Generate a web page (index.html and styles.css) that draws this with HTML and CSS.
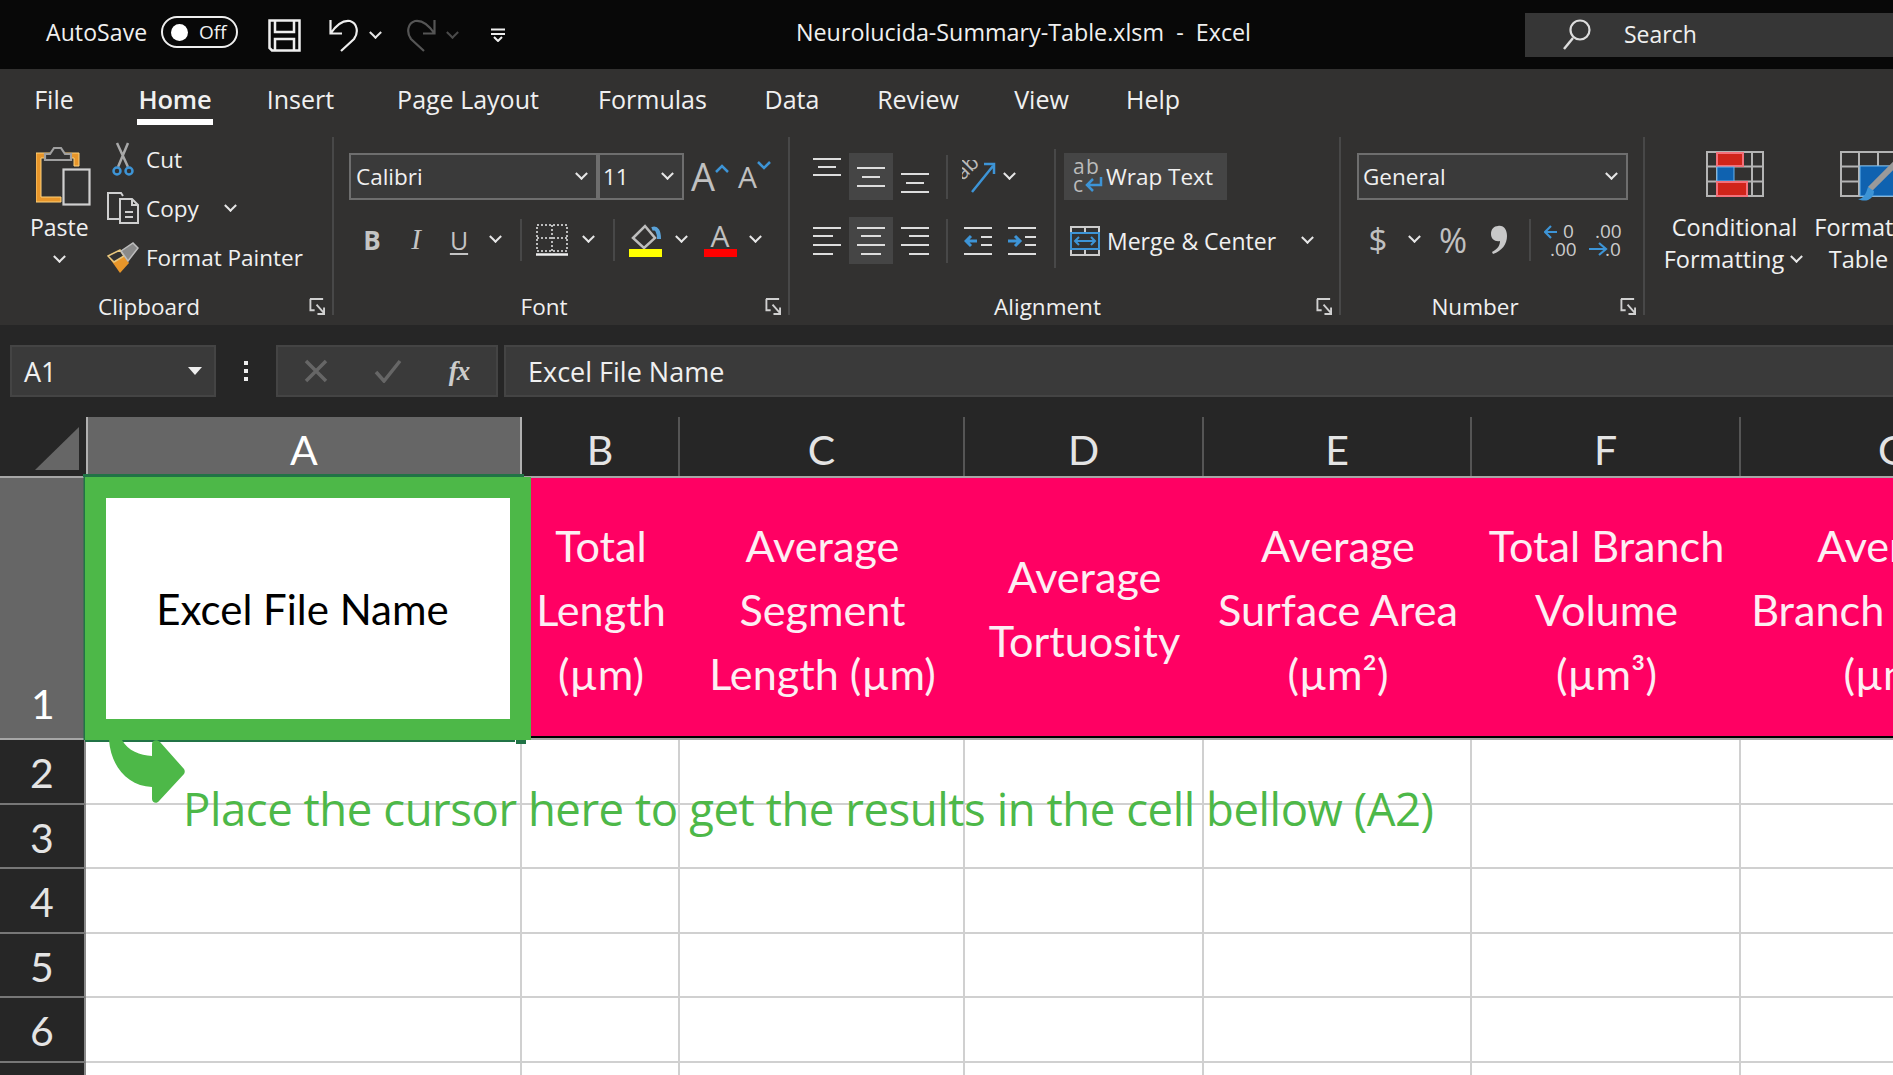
FILE: index.html
```html
<!DOCTYPE html>
<html lang="en">
<head>
<meta charset="utf-8">
<title>Neurolucida-Summary-Table.xlsm - Excel</title>
<link rel="stylesheet" href="styles.css">
</head>
<body>
<svg class="sprite" width="0" height="0">
  <symbol id="launch" viewBox="0 0 17 18"><path d="M1 1H15M1.500 1V13H6M8 7L16 16M16 10V17H9" fill="none" stroke="#d0d0d0" stroke-width="2"/></symbol>
</svg>
<header class="titlebar">
  <span class="autosave">AutoSave</span>
  <span class="toggle"><i class="knob"></i><span class="off">Off</span></span>
  <svg class="q-save" width="33" height="33" viewBox="0 0 33 33"><path d="M1.500 1.500H31.500V31.500H4L1.500 29ZM7 1.500V13H26V1.500M7 31.500V20H26V31.500" fill="none" stroke="#eee" stroke-width="2.500"/></svg>
  <svg class="q-undo" width="30" height="33" viewBox="0 0 30 33"><path d="M1.500 1V14.500H13M1.500 14.500C8 5 15 1 21 2C28 4 30 13 25 20L12 32" fill="none" stroke="#eee" stroke-width="2.200"/></svg>
  <i class="chev q-chev"></i>
  <svg class="q-redo" width="30" height="33" viewBox="0 0 30 33"><path d="M28.500 1V14.500H17M28.500 14.500C22 5 15 1 9 2C2 4 0 13 5 20L18 32" fill="none" stroke="#555" stroke-width="2.200"/></svg>
  <i class="chev q-chev dim"></i>
  <svg class="q-more" width="14" height="14" viewBox="0 0 14 14"><path d="M0 1.500H14M0 6H14M3 9L7 13L11 9" fill="none" stroke="#eee" stroke-width="2"/></svg>
  <span class="doc-title">Neurolucida-Summary-Table.xlsm&nbsp; -&nbsp; Excel</span>
  <div class="search">
    <svg width="28" height="31" viewBox="0 0 28 31"><circle cx="17" cy="11" r="9.500" fill="none" stroke="#ddd" stroke-width="2.200"/><path d="M10 19L1 30" stroke="#ddd" stroke-width="2.500"/></svg>
    <span>Search</span>
  </div>
</header>

<section class="ribbon-wrap">
  <nav class="tabs">
    <span>File</span><span class="active">Home</span><span>Insert</span><span>Page Layout</span><span>Formulas</span><span>Data</span><span>Review</span><span>View</span><span>Help</span>
  </nav>
  <div class="ribbon">
    <div class="group g-clip">
      <div class="g-body clip-body">
        <div class="paste">
          <svg class="paste-ico" width="56" height="62" viewBox="0 0 56 62">
            <path d="M0 8H43V21H38V13H5V52H25V57H0Z" fill="#e8962a" stroke="#ffd27a" stroke-width="1"/>
            <path d="M9 15V9H14L18 3H25L29 9H35V15Z" fill="#323232" stroke="#a0a0a0" stroke-width="2.200"/>
            <rect x="27.500" y="24.500" width="26" height="35" fill="#323232" stroke="#cfcfcf" stroke-width="2.200"/>
          </svg>
          <span class="paste-label">Paste</span>
          <i class="chev"></i>
        </div>
        <div class="clip-rows">
          <div class="clip-row">
            <svg width="32" height="34" viewBox="0 0 32 34"><path d="M10 1L21 25M21 1L11 25" stroke="#a8a8a8" stroke-width="2.500" fill="none"/><circle cx="10" cy="29" r="3.500" fill="none" stroke="#3d94d6" stroke-width="2.500"/><circle cx="22" cy="29" r="3.500" fill="none" stroke="#3d94d6" stroke-width="2.500"/></svg>
            <span>Cut</span>
          </div>
          <div class="clip-row">
            <svg width="32" height="32" viewBox="0 0 32 32"><path d="M12 27H1V1H14L16 4" fill="none" stroke="#cfcfcf" stroke-width="2"/><path d="M13 7H25L31 13V31H13ZM25 7V13H31" fill="#323232" stroke="#cfcfcf" stroke-width="2"/><path d="M18 20H26M18 25H26" stroke="#cfcfcf" stroke-width="2"/></svg>
            <span>Copy</span><i class="chev copy-chev"></i>
          </div>
          <div class="clip-row">
            <svg width="32" height="32" viewBox="0 0 32 32"><path d="M1 14L13 8L22 21L13 31Z" fill="#e8962a"/><path d="M1 14L13 8L17 14L7 20Z" fill="#323232" stroke="#e9c77d" stroke-width="1.500"/><path d="M14 9L26 1L31 6L21 19Z" fill="#8a8a8a" stroke="#bdbdbd" stroke-width="1.500"/></svg>
            <span>Format Painter</span>
          </div>
        </div>
      </div>
      <footer class="g-foot"><span>Clipboard</span><svg class="launch"><use href="#launch"/></svg></footer>
    </div>
    <i class="vsep"></i>

    <div class="group g-font">
      <div class="g-body">
        <div class="font-top">
          <div class="combo font-name"><span>Calibri</span><i class="chev"></i></div>
          <div class="combo font-size"><span>11</span><i class="chev"></i></div>
          <span class="grow-a">A<svg width="14" height="9" viewBox="0 0 14 9"><path d="M1 8L7 2L13 8" fill="none" stroke="#3d94d6" stroke-width="2.500"/></svg></span>
          <span class="shrink-a">A<svg width="14" height="9" viewBox="0 0 14 9"><path d="M1 1L7 7L13 1" fill="none" stroke="#3d94d6" stroke-width="2.500"/></svg></span>
        </div>
        <div class="font-bottom">
          <b class="fmt">B</b><em class="fmt italic">I</em><span class="fmt under">U</span><i class="chev"></i>
          <i class="minisep"></i>
          <svg width="32" height="32" viewBox="0 0 32 32"><path d="M1 1H31V27H1ZM16 1V27M1 14H31" fill="none" stroke="#bbb" stroke-width="2" stroke-dasharray="2 2"/><path d="M0 30.500H32" stroke="#eee" stroke-width="2.500"/></svg>
          <i class="chev"></i>
          <i class="minisep"></i>
          <div class="color-ico">
            <svg width="34" height="25" viewBox="0 0 34 25"><path d="M5 14L17 2L27 14L16 24Z" fill="none" stroke="#bdbdbd" stroke-width="2.500"/><path d="M24 5C29 3 31 8 31 15" fill="none" stroke="#5aa2d8" stroke-width="4"/></svg>
            <i class="bar yellow"></i>
          </div>
          <i class="chev"></i>
          <div class="color-ico">
            <span class="color-a">A</span>
            <i class="bar red"></i>
          </div>
          <i class="chev"></i>
        </div>
      </div>
      <footer class="g-foot"><span>Font</span><svg class="launch"><use href="#launch"/></svg></footer>
    </div>
    <i class="vsep"></i>

    <div class="group g-align">
      <div class="g-body align-body">
        <div class="align-left">
          <div class="align-row top-row">
            <div class="al v-top"><svg width="28" height="20" viewBox="0 0 28 20"><path d="M0 1H28M5 9H23M0 17H28" stroke="#ddd" stroke-width="2"/></svg></div>
            <div class="al on"><svg width="28" height="20" viewBox="0 0 28 20"><path d="M0 1H28M5 10H23M0 19H28" stroke="#ddd" stroke-width="2"/></svg></div>
            <div class="al v-bot"><svg width="28" height="20" viewBox="0 0 28 20"><path d="M0 1H28M5 10H23M0 19H28" stroke="#ddd" stroke-width="2"/></svg></div>
            <i class="minisep sep-a"></i>
            <div class="orient">
              <svg width="34" height="34" viewBox="0 0 34 34"><text x="0" y="0" class="ico-txt lg" transform="translate(1 21) rotate(-45)">ab</text><path d="M10 32L31 6M22 4H32V14" fill="none" stroke="#3d94d6" stroke-width="2.500"/></svg>
            </div>
            <i class="chev"></i>
          </div>
          <div class="align-row">
            <div class="al"><svg width="28" height="28" viewBox="0 0 28 28"><path d="M0 1H28M0 9H20M0 18H28M0 27H20" stroke="#ddd" stroke-width="2"/></svg></div>
            <div class="al on"><svg width="28" height="28" viewBox="0 0 28 28"><path d="M0 1H28M4 9H24M0 18H28M4 27H24" stroke="#ddd" stroke-width="2"/></svg></div>
            <div class="al"><svg width="28" height="28" viewBox="0 0 28 28"><path d="M0 1H28M8 9H28M0 18H28M8 27H28" stroke="#ddd" stroke-width="2"/></svg></div>
            <i class="minisep sep-a"></i>
            <div class="indent"><svg width="30" height="28" viewBox="0 0 30 28"><path d="M0 1H28M17 10H28M17 18H28M0 27H28" stroke="#ddd" stroke-width="2"/><path d="M13 14H2M7 9L2 14L7 19" fill="none" stroke="#3d94d6" stroke-width="3"/></svg></div>
            <div class="indent"><svg width="30" height="28" viewBox="0 0 30 28"><path d="M1 1H29M18 10H29M18 18H29M1 27H29" stroke="#ddd" stroke-width="2"/><path d="M1 14H13M8 9L13 14L8 19" fill="none" stroke="#3d94d6" stroke-width="3"/></svg></div>
          </div>
        </div>
        <i class="vsep-tall"></i>
        <div class="align-right">
          <div class="wrap-btn">
            <svg width="30" height="36" viewBox="0 0 30 36"><text x="0" y="15" class="ico-txt lg">a</text><text x="13" y="15" class="ico-txt lg">b</text><text x="0" y="33" class="ico-txt lg">c</text><path d="M28 18V26H15M20 20L14 26L20 32" fill="none" stroke="#3d94d6" stroke-width="2.500"/></svg>
            <span>Wrap Text</span>
          </div>
          <div class="merge-btn">
            <svg width="30" height="30" viewBox="0 0 30 30"><path d="M1 1H29V29H1ZM15 1V7M15 23V29" fill="none" stroke="#ccc" stroke-width="2"/><rect x="1" y="7" width="28" height="16" fill="#323232" stroke="#3d94d6" stroke-width="2"/><path d="M5 15H25M9 11L5 15L9 19M21 11L25 15L21 19" fill="none" stroke="#3d94d6" stroke-width="2"/></svg>
            <span>Merge &amp; Center</span><i class="chev merge-chev"></i>
          </div>
        </div>
      </div>
      <footer class="g-foot"><span>Alignment</span><svg class="launch"><use href="#launch"/></svg></footer>
    </div>
    <i class="vsep"></i>

    <div class="group g-num">
      <div class="g-body">
        <div class="combo num-combo"><span>General</span><i class="chev"></i></div>
        <div class="num-bottom">
          <span class="dollar">$</span><i class="chev"></i><span class="pct">%</span>
          <svg width="18" height="32" viewBox="0 0 18 32"><path d="M8 2C14 1 17 6 17 12C17 20 12 27 3 30L2 28C8 25 10 21 10 17C5 18 1 15 1 10C1 5 4 2 8 2Z" fill="#c8c8c8"/></svg>
          <i class="minisep"></i>
          <svg width="32" height="34" viewBox="0 0 32 34"><path d="M13 9H2M7 3L1 9L7 15" fill="none" stroke="#3d94d6" stroke-width="2.200"/><text x="19" y="15" class="ico-txt num">0</text><text x="6" y="33" class="ico-txt num">.00</text></svg>
          <svg width="34" height="34" viewBox="0 0 34 34"><text x="7" y="15" class="ico-txt num">.00</text><path d="M1 26H17M11 20L18 26L11 32" fill="none" stroke="#3d94d6" stroke-width="2.200"/><text x="17" y="33" class="ico-txt num">.0</text></svg>
        </div>
      </div>
      <footer class="g-foot"><span>Number</span><svg class="launch"><use href="#launch"/></svg></footer>
    </div>
    <i class="vsep"></i>

    <div class="group g-styles">
      <div class="big-btn cf">
        <svg width="58" height="46" viewBox="0 0 58 46"><path d="M1 1H57V45H1ZM1 15.500H57M1 30.500H57M11 1V45M46 1V45" fill="none" stroke="#b4b4b4" stroke-width="2"/><rect x="11" y="2" width="26" height="13" fill="#d0241a" stroke="#f4707a" stroke-width="2"/><rect x="11" y="16" width="17" height="14" fill="#0f62b0" stroke="#68b4ee" stroke-width="1"/><rect x="11" y="31" width="30" height="14" fill="#d0241a" stroke="#f4707a" stroke-width="2"/></svg>
        <span class="big-label">Conditional</span>
        <span class="big-label with-chev">Formatting <i class="chev"></i></span>
      </div>
      <div class="big-btn ft">
        <svg width="58" height="52" viewBox="0 0 58 52"><path d="M1 1H57V45H1ZM1 15.500H57M1 30.500H57M19 1V45M38 1V45" fill="none" stroke="#b4b4b4" stroke-width="2"/><rect x="20" y="15" width="36" height="30" fill="#0f62b0" stroke="#68b4ee" stroke-width="1"/><path d="M30 38L56 12" stroke="#9a9a9a" stroke-width="6"/><path d="M18 48C24 48 26 42 28 36L34 40C34 48 26 52 18 48Z" fill="#3d94d6"/></svg>
        <span class="big-label">Format as</span>
        <span class="big-label with-chev">Table <i class="chev"></i></span>
      </div>
    </div>
  </div>
</section>

<section class="formula-bar">
  <div class="namebox"><span>A1</span><i class="tri"></i></div>
  <div class="dots"><i></i><i></i><i></i></div>
  <div class="fx-btns">
    <svg class="fb1" width="24" height="24" viewBox="0 0 24 24"><path d="M2 2L22 22M22 2L2 22" stroke="#666" stroke-width="3.500"/></svg>
    <svg class="fb2" width="28" height="24" viewBox="0 0 28 24"><path d="M2 13L10 22L26 2" fill="none" stroke="#666" stroke-width="3.500"/></svg>
    <span class="fb3">fx</span>
  </div>
  <div class="formula-input">Excel File Name</div>
</section>

<main class="sheet">
  <div class="col-head">
    <div class="corner"><svg width="44" height="43" viewBox="0 0 44 43"><path d="M44 0V43H0Z" fill="#666"/></svg></div>
    <div class="ch sel">A</div><div class="ch">B</div><div class="ch">C</div><div class="ch">D</div><div class="ch">E</div><div class="ch">F</div><div class="ch">G</div>
  </div>
  <div class="row-one">
    <div class="rh rh-sel">1</div>
    <div class="cell a1">Excel File Name</div>
    <div class="cell pink">Total<br>Length<br>(µm)</div>
    <div class="cell pink">Average<br>Segment<br>Length (µm)</div>
    <div class="cell pink two">Average<br>Tortuosity</div>
    <div class="cell pink">Average<br>Surface Area<br>(µm²)</div>
    <div class="cell pink">Total Branch<br>Volume<br>(µm³)</div>
    <div class="cell pink">Average<br>Branch Volume<br>(µm³)</div>
  </div>
  <div class="row"><div class="rh">2</div><i></i><i></i><i></i><i></i><i></i><i></i><i></i></div>
  <div class="row"><div class="rh">3</div><i></i><i></i><i></i><i></i><i></i><i></i><i></i></div>
  <div class="row"><div class="rh">4</div><i></i><i></i><i></i><i></i><i></i><i></i><i></i></div>
  <div class="row"><div class="rh">5</div><i></i><i></i><i></i><i></i><i></i><i></i><i></i></div>
  <div class="row"><div class="rh">6</div><i></i><i></i><i></i><i></i><i></i><i></i><i></i></div>
  <div class="row"><div class="rh"></div><i></i><i></i><i></i><i></i><i></i><i></i><i></i></div>

  <div class="selection"></div>
  <i class="handle"></i>
  <svg class="arrow" width="78" height="66" viewBox="0 0 78 66"><path d="M1 0C3 27 20 46 44 47V59C44 63 49 64 51 61L76 34C77 32 77 31 76 29L52 2C49 -1 44 0 44 4V16C32 15 20 11 14 0Z" fill="#4db848"/></svg>
  <div class="callout">Place the cursor here to get the results in the cell bellow (A2)</div>
</main>
</body>
</html>
```
FILE: styles.css
```css
* { box-sizing: border-box; }
html, body { margin: 0; padding: 0; }
body {
  width: 1893px;
  height: 1075px;
  overflow: hidden;
  background: #262626;
  color: #f0f0f0;
  font-family: "Open Sans", "Noto Sans", sans-serif;
  font-size: 22.5px;
}
i { font-style: normal; display: block; }
.sprite { position: absolute; }
.chev {
  width: 9px;
  height: 9px;
  border-right: 2.5px solid #e6e6e6;
  border-bottom: 2.5px solid #e6e6e6;
  transform: rotate(45deg) translate(-2px, -2px);
  flex: none;
}
.chev.dim { border-color: #4a4a4a; }

/* title bar */
.titlebar {
  height: 69px;
  background: #080808;
  display: flex;
  align-items: center;
  padding: 0 0 5px 46px;
  font-size: 23px;
}
.titlebar > svg, .titlebar > .chev { margin-top: 6px; }
.autosave { width: 115px; flex: none; letter-spacing: 0.1px; }
.toggle {
  width: 77px;
  height: 32px;
  border: 2px solid #eee;
  border-radius: 16px;
  display: flex;
  align-items: center;
  padding-left: 8px;
  flex: none;
}
.knob { width: 17px; height: 17px; border-radius: 50%; background: #fff; }
.off { font-size: 19px; margin-left: 11px; }
.q-save { margin-left: 30px; flex: none; }
.q-undo { margin-left: 28px; flex: none; }
.q-chev { margin-left: 12px; margin-right: 4px; }
.q-redo { margin-left: 22px; flex: none; }
.q-more { margin-left: 30px; flex: none; }
.doc-title { margin-left: 291px; width: 453px; flex: none; white-space: nowrap; font-size: 23.300px; }
.search {
  margin: 5px 0 0 276px;
  flex: 1;
  height: 44px;
  background: #363636;
  display: flex;
  align-items: center;
  padding-left: 38px;
  gap: 33px;
}
.search span { margin-top: -2px; }

/* ribbon */
.ribbon-wrap { height: 256px; background: #323130; }
.tabs {
  height: 68px;
  padding: 9px 0 0 14px;
  display: grid;
  grid-template-columns: 80px 162px 89px 246px 123px 156px 96px 151px 72px;
  justify-items: center;
  font-size: 25px;
}
.tabs span { height: 47px; line-height: 42px; white-space: nowrap; }
.tabs .active { border-bottom: 6px solid #fff; padding: 0 2px; font-weight: 600; font-size: 25.500px; letter-spacing: -0.2px; }
.ribbon { display: flex; height: 188px; }
.vsep { width: 2px; height: 178px; background: #484848; flex: none; }
.group { display: flex; flex-direction: column; height: 188px; flex: none; }
.g-clip { width: 332px; }
.g-font { width: 454px; }
.g-align { width: 549px; }
.g-num { width: 302px; }
.g-styles { flex: 1; flex-direction: row; padding-left: 14px; }
.g-body { flex: 1; min-height: 0; }
.g-foot {
  height: 30px;
  margin-bottom: 4px;
  display: flex;
  align-items: center;
  padding-right: 7px;
  flex: none;
}
.g-foot span { flex: 1; text-align: center; padding-right: 11px; }
.launch { width: 16px; height: 17px; flex: none; }

/* clipboard */
.clip-body { display: flex; padding-left: 31px; }
.paste { width: 56px; display: flex; flex-direction: column; align-items: flex-start; padding-top: 8px; flex: none; }
.paste-ico { margin-left: 5px; flex: none; }
.paste-label { line-height: 30px; margin-top: 5px; margin-left: -1px; font-size: 23px; }
.paste .chev { margin: 13px 0 0 24px; }
.clip-rows { margin-left: 20px; display: grid; grid-template-rows: 44px 54px 45px; }
.clip-row { display: flex; align-items: center; gap: 7px; white-space: nowrap; }
.copy-chev { margin-left: 20px; }

/* shared combos */
.combo {
  height: 47px;
  border: 2px solid #6e6e6e;
  background: #3a3a3a;
  display: flex;
  align-items: center;
  justify-content: space-between;
  padding: 0 10px 0 5px;
  flex: none;
}
.ico-txt { font-family: "Open Sans", sans-serif; font-size: 17px; fill: #bbb; }
.ico-txt.lg { font-size: 21px; }
.ico-txt.num { font-size: 19px; fill: #ccc; }
.minisep { width: 2px; height: 42px; background: #484848; flex: none; }

/* font */
.g-font .g-body { padding: 16px 0 0 15px; }
.font-top { display: flex; align-items: center; height: 47px; }
.font-name { width: 249px; }
.font-size { width: 86px; margin-left: 0; padding-left: 3px; }
.grow-a, .shrink-a {
  display: flex;
  color: #c0c0c0;
  line-height: 47px;
  align-items: flex-start;
}
.grow-a { font-size: 38px; margin-left: 7px; width: 47px; }
.shrink-a { font-size: 30px; }
.grow-a svg { margin-top: 11px; }
.shrink-a svg { margin-top: 8px; }
.font-bottom {
  margin: 16px 0 0 1px;
  height: 47px;
  display: grid;
  grid-template-columns: 44px 44px 42px 30px 22px 39px 34px 18px 44px 28px 50px 20px;
  justify-items: center;
  align-items: center;
}
.fmt { font-size: 26px; color: #c4c4c4; }
.italic { font-family: "Liberation Serif", serif; font-size: 29px; }
.under { text-decoration: underline; text-underline-offset: 3px; font-size: 25px; }
.color-ico { display: flex; flex-direction: column; align-items: center; width: 34px; height: 34px; justify-content: flex-end; }
.color-a { font-size: 30px; line-height: 26px; color: #c0c0c0; }
.bar { width: 33px; height: 8px; flex: none; }
.yellow { background: #ffff00; }
.red { background: #ff0000; }

/* alignment */
.align-body { display: flex; padding: 16px 0 0 15px; }
.align-left { width: 249px; flex: none; }
.align-row { display: grid; grid-template-columns: 44px 44px 44px 20px 43px 44px; height: 47px; align-items: center; justify-items: center; }
.top-row { grid-template-columns: 44px 44px 44px 20px 43px 18px; margin-bottom: 17px; }
.al { width: 44px; height: 47px; display: flex; align-items: center; justify-content: center; }
.al.on { background: #454545; }
.v-top { align-items: flex-start; padding-top: 5px; }
.v-bot { align-items: flex-end; padding-bottom: 7px; }
.sep-a { height: 44px; }
.orient, .indent { display: flex; align-items: center; }
.vsep-tall { width: 2px; height: 119px; margin-top: -4px; background: #484848; flex: none; }
.align-right { margin-left: 8px; flex: 1; }
.wrap-btn {
  width: 163px;
  height: 47px;
  background: #454545;
  display: flex;
  align-items: center;
  padding-left: 9px;
  gap: 3px;
  margin-bottom: 17px;
  white-space: nowrap;
}
.merge-btn { display: flex; align-items: center; height: 47px; padding-left: 6px; gap: 7px; white-space: nowrap; font-size: 23px; }
.merge-chev { margin-left: 20px; }

/* number */
.g-num .g-body { padding: 16px 0 0 16px; }
.num-combo { width: 271px; padding-left: 4px; }
.num-bottom {
  margin-top: 16px;
  height: 47px;
  display: grid;
  grid-template-columns: 42px 30px 48px 44px 18px 42px 48px;
  justify-items: center;
  align-items: center;
}
.dollar { font-size: 33px; color: #c0c0c0; }
.pct { font-size: 34px; color: #c0c0c0; }

/* styles */
.big-btn { display: flex; flex-direction: column; align-items: center; padding-top: 14px; flex: none; }
.big-btn svg { flex: none; margin-bottom: 14px; }
.big-btn.cf { width: 151px; }
.big-btn.ft { width: 118px; }
.big-btn.ft svg { margin-bottom: 8px; }
.big-label { line-height: 32px; white-space: nowrap; display: flex; align-items: center; gap: 6px; font-size: 23.500px; }
.with-chev { padding-right: 4px; gap: 8px; }

/* formula bar */
.formula-bar {
  height: 92px;
  padding: 20px 0 20px 10px;
  display: flex;
  background: #262626;
}
.namebox, .fx-btns, .formula-input {
  height: 52px;
  background: #3a3a3a;
  border: 2px solid #444;
  display: flex;
  align-items: center;
  flex: none;
}
.namebox { width: 206px; padding: 0 12px 0 12px; justify-content: space-between; font-size: 27px; }
.tri { width: 0; height: 0; border: 7px solid transparent; border-top: 8px solid #eee; border-bottom: 0; }
.dots { width: 60px; display: flex; flex-direction: column; align-items: center; justify-content: center; gap: 4px; flex: none; }
.dots i { width: 4px; height: 4px; background: #eee; }
.fx-btns { width: 222px; position: relative; display: grid; grid-template-columns: 76px 68px 74px; justify-items: center; }
.fb3 { font-family: "Liberation Serif", serif; font-style: italic; font-weight: bold; font-size: 27px; color: #ccc; letter-spacing: -1px; }
.formula-input { flex: 1; margin-left: 6px; padding-left: 22px; font-size: 27px; border-right: 0; }

/* sheet */
.sheet {
  --cols: 86px 436px 158px 285px 239px 268px 269px 306px;
  position: relative;
  background: #fff;
  height: 658px;
  overflow: hidden;
}
.col-head {
  display: grid;
  grid-template-columns: var(--cols);
  height: 61px;
  background: #262626;
  border-bottom: 2px solid #a6a6a6;
  font-family: Lato, "Open Sans", sans-serif;
  font-size: 41px;
}
.corner { display: flex; align-items: flex-start; padding: 10px 0 0 35px; }
.ch {
  border-right: 2px solid #555;
  text-align: center;
  line-height: 66px;
  color: #e4e4e4;
  height: 59px;
}
.ch.sel { background: #666; border-left: 2px solid #b0b0b0; border-right: 2px solid #b0b0b0; color: #fff; }
.row-one {
  display: grid;
  grid-template-columns: var(--cols);
  height: 262px;
  font-family: Lato, "Open Sans", sans-serif;
  font-size: 43.200px;
}
.rh {
  background: #262626;
  color: #e4e4e4;
  font-family: Lato, "Open Sans", sans-serif;
  font-size: 41px;
  text-align: center;
  border-right: 2px solid #8a8a8a;
  border-bottom: 2px solid #777;
  line-height: 66px;
}
.rh-sel { background: #666; color: #fff; display: flex; align-items: flex-end; justify-content: center; padding-bottom: 2px; border-right: 0; border-bottom: 2px solid #a6a6a6; line-height: 64px; }
.cell { display: flex; align-items: center; justify-content: center; text-align: center; white-space: nowrap; }
.a1 { background: #fff; color: #000; font-size: 42px; padding-right: 3px; }
.pink {
  background: #ff0063;
  color: #fdeef3;
  line-height: 64px;
  height: 258px;
  padding-top: 4px;
  box-shadow: 0 2px 0 #000, 0 4px 0 #a6a6a6;
}
.pink.two { padding-top: 2px; }
.row {
  display: grid;
  grid-template-columns: var(--cols);
  grid-template-rows: 64.500px;
  height: 64.500px;
}
.row i { border-right: 2px solid #d0d0d0; border-bottom: 2px solid #d0d0d0; }

/* overlays */
.selection {
  position: absolute;
  left: 85px;
  top: 60px;
  width: 446px;
  height: 263px;
  border: 21px solid #4db848;
  box-shadow: -1.500px 0 0 #217346;
  pointer-events: none;
}
.selection::before {
  content: "";
  position: absolute;
  left: -23px;
  top: -24px;
  width: 441px;
  height: 3px;
  background: #217346;
}
.selection::after {
  content: "";
  position: absolute;
  left: -21px;
  bottom: -23px;
  width: 430px;
  height: 2px;
  background: #217346;
}
.handle { position: absolute; left: 516px; top: 323px; width: 10px; height: 4px; background: #217346; }
.arrow { position: absolute; left: 108px; top: 323px; }
.callout {
  position: absolute;
  left: 183px;
  top: 358px;
  color: #4db848;
  font-size: 45.500px;
  letter-spacing: -0.450px;
  line-height: 66px;
  white-space: nowrap;
}
```
